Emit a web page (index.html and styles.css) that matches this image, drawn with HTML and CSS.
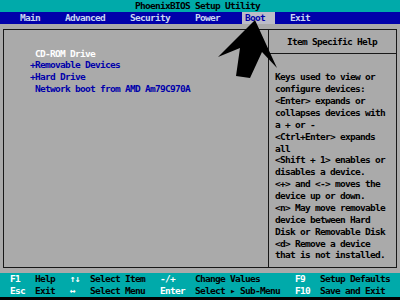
FILE: index.html
```html
<!DOCTYPE html>
<html>
<head>
  <title>PhoenixBIOS Setup Utility</title>
  <link rel="stylesheet" href="styles.css">
</head>
<body>
  <div class="screen">
    <div class="title">PhoenixBIOS Setup Utility</div>

    <div class="menu">
      <span class="menu-item">Main</span>
      <span class="menu-item">Advanced</span>
      <span class="menu-item">Security</span>
      <span class="menu-item">Power</span>
      <span class="menu-item active">Boot</span>
      <span class="menu-item">Exit</span>
    </div>

    <div class="main">
      <div class="box">
        <div class="boot-list">
          <div class="boot-item current">CD-ROM Drive</div>
          <div class="boot-item group">+Removable Devices</div>
          <div class="boot-item group">+Hard Drive</div>
          <div class="boot-item">Network boot from AMD Am79C970A</div>
        </div>

        <div class="help">
          <div class="help-title">Item Specific Help</div>
          <div class="help-text">
            Keys used to view or<br>
            configure devices:<br>
            &lt;Enter&gt; expands or<br>
            collapses devices with<br>
            a + or -<br>
            &lt;Ctrl+Enter&gt; expands<br>
            all<br>
            &lt;Shift + 1&gt; enables or<br>
            disables a device.<br>
            &lt;+&gt; and &lt;-&gt; moves the<br>
            device up or down.<br>
            &lt;n&gt; May move removable<br>
            device between Hard<br>
            Disk or Removable Disk<br>
            &lt;d&gt; Remove a device<br>
            that is not installed.
          </div>
        </div>
      </div>
    </div>

    <div class="footer">
      <span class="key">F1</span>
      <span class="desc">Help</span>
      <span class="key">↑↓</span>
      <span class="desc">Select Item</span>
      <span class="key">-/+</span>
      <span class="desc">Change Values</span>
      <span class="key">F9</span>
      <span class="desc">Setup Defaults</span>

      <span class="key">Esc</span>
      <span class="desc">Exit</span>
      <span class="key">↔</span>
      <span class="desc">Select Menu</span>
      <span class="key">Enter</span>
      <span class="desc">Select ▸ Sub-Menu</span>
      <span class="key">F10</span>
      <span class="desc">Save and Exit</span>
    </div>
  </div>

  <!-- annotation arrow pointing at the Boot tab -->
  <svg class="pointer" width="400" height="300" viewBox="0 0 400 300">
    <polygon points="255,20 277,68 262,52 250,78 236,76 240,48 218,57" fill="#000"/>
  </svg>
</body>
</html>
```

FILE: styles.css
```css
body {
  margin: 0;
  width: 400px;
  height: 300px;
  overflow: hidden;
  position: relative;
  background: #000;
}

/* 80x25 text screen: every column is 5px wide, every row 11.88px */
.screen {
  width: 400px;
  height: 300px;
  font-family: "DejaVu Sans Mono", monospace;
  font-weight: bold;
  font-size: 9.5px;
  letter-spacing: calc(5px - 1ch);
  line-height: 11.88px;
  white-space: nowrap;
  background: #000;
}

.title {
  height: 11.88px;
  padding-left: 135px;
  background: #00aaaa;
  color: #000;
}

.menu {
  display: flex;
  gap: 25px;
  height: 11.88px;
  padding-left: 20px;
  background: #0000aa;
  color: #c8d4f0;
}

.menu-item.active {
  padding: 0 10px 0 3.5px;
  margin: 0 -10px 0 -3.5px;
  background: #bcbcc8;
  color: #0000aa;
}

.main {
  display: flex;
  height: 249.48px;
  box-sizing: border-box;
  padding: 5.44px 3.5px 5.24px 2.5px;
  background: #aaaaaa;
}

.box {
  flex: 1;
  display: flex;
  border: 1px solid #181818;
}

.boot-list {
  flex: 1;
  padding: 17.32px 0 0 31.5px;
}

.boot-item {
  color: #0000aa;
}

.boot-item.current {
  color: #fff;
}

.boot-item.group {
  margin-left: -5px;
}

.help {
  width: 128px;
  box-sizing: border-box;
  border-left: 1px solid #181818;
  color: #000;
}

.help-title {
  padding: 5.44px 0 5px 0;
  text-align: center;
  border-bottom: 1px solid #181818;
}

.help-text {
  padding: 17.76px 0 0 6.5px;
}

.footer {
  display: grid;
  grid-template-columns: 25px 35px 20px 70px 35px 100px 25px 1fr;
  height: 23.76px;
  padding-left: 10px;
  background: #00aaaa;
}

.key {
  color: #fff;
}

.desc {
  color: #000;
}

.pointer {
  position: absolute;
  left: 0;
  top: 0;
}
```
